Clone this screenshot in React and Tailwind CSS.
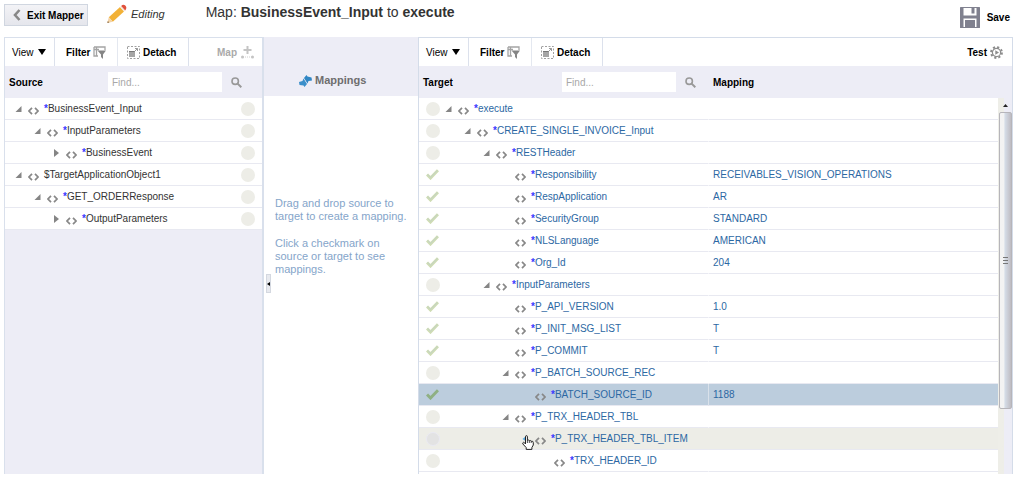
import React from "react";

const sourceRows = [
  { level: 0, name: "BusinessEvent_Input", state: "open", required: true },
  { level: 1, name: "InputParameters", state: "open", required: true },
  { level: 2, name: "BusinessEvent", state: "closed", required: true },
  { level: 0, name: "$TargetApplicationObject1", state: "open", required: false },
  { level: 1, name: "GET_ORDERResponse", state: "open", required: true },
  { level: 2, name: "OutputParameters", state: "closed", required: true },
];

const targetRows = [
  { level: 0, name: "execute", state: "open" },
  { level: 1, name: "CREATE_SINGLE_INVOICE_Input", state: "open" },
  { level: 2, name: "RESTHeader", state: "open" },
  { level: 3, name: "Responsibility", value: "RECEIVABLES_VISION_OPERATIONS" },
  { level: 3, name: "RespApplication", value: "AR" },
  { level: 3, name: "SecurityGroup", value: "STANDARD" },
  { level: 3, name: "NLSLanguage", value: "AMERICAN" },
  { level: 3, name: "Org_Id", value: "204" },
  { level: 2, name: "InputParameters", state: "open" },
  { level: 3, name: "P_API_VERSION", value: "1.0" },
  { level: 3, name: "P_INIT_MSG_LIST", value: "T" },
  { level: 3, name: "P_COMMIT", value: "T" },
  { level: 3, name: "P_BATCH_SOURCE_REC", state: "open" },
  { level: 4, name: "BATCH_SOURCE_ID", value: "1188", selected: true },
  { level: 3, name: "P_TRX_HEADER_TBL", state: "open" },
  { level: 4, name: "P_TRX_HEADER_TBL_ITEM", hovered: true, state: "open" },
  { level: 5, name: "TRX_HEADER_ID" },
];

const indents = ["pl-0", "pl-[19px]", "pl-[38px]", "pl-[57px]", "pl-[77px]", "pl-[96px]"];

function FilterIcon() {
  return (
    <svg width="13" height="13" viewBox="0 0 13 13" aria-hidden="true">
      <path d="M1 1h11v3M1 1v9h4M1 3.5h5M3.5 1v9" fill="none" stroke="#a4a4a4" strokeWidth="1.3" />
      <path d="M4.5 4.5H13L10 8.500V13L8 11V8.500z" fill="#858585" />
    </svg>
  );
}

function DetachIcon() {
  return (
    <svg width="13" height="13" viewBox="0 0 13 13" aria-hidden="true">
      <rect x="0.5" y="0.5" width="12" height="12" fill="none" stroke="#a0a0a0" strokeDasharray="2 1.500" />
      <rect x="2" y="6" width="6" height="5" fill="#a5a5a5" />
      <path d="M2 5.500h6" stroke="#777" />
      <path d="M7.500 5.500l3-3M8 2.500h2.500V5" fill="none" stroke="#999" />
    </svg>
  );
}

function AddMapIcon() {
  return (
    <svg width="13" height="13" viewBox="0 0 13 13" aria-hidden="true">
      <path d="M6.500 0v8M2.500 4h8" stroke="#c4c4c4" strokeWidth="2" />
      <path d="M2 11h9" stroke="#d0d0d0" strokeDasharray="1 1" />
      <circle cx="1.500" cy="11" r="1.500" fill="#c4c4c4" />
      <circle cx="11.500" cy="11" r="1.500" fill="#c4c4c4" />
    </svg>
  );
}

function SearchIcon() {
  return (
    <svg width="11" height="11" viewBox="0 0 11 11" aria-hidden="true">
      <circle cx="4.200" cy="4.200" r="3.200" fill="none" stroke="#999" strokeWidth="1.600" />
      <path d="M6.600 6.600L10.300 10.300" stroke="#999" strokeWidth="2" />
    </svg>
  );
}

function GearIcon() {
  return (
    <svg width="13" height="13" viewBox="0 0 13 13" aria-hidden="true">
      <circle cx="6.500" cy="6.500" r="5.400" fill="none" stroke="#8c8c8c" strokeWidth="2" strokeDasharray="2.120 2.120" />
      <circle cx="6.500" cy="6.500" r="4.100" fill="none" stroke="#8c8c8c" strokeWidth="1.200" />
      <path d="M5.300 4.300L9 6.500L5.300 8.700z" fill="#8c8c8c" />
    </svg>
  );
}

function PencilIcon() {
  return (
    <svg width="20" height="20" viewBox="0 0 20 20" aria-hidden="true">
      <path d="M1.800 13.200L5.800 17.800L17 7.500L13 3z" fill="#f2b136" />
      <path d="M1.800 13.200L0.300 19L5.800 17.800z" fill="#f3d3a6" />
      <path d="M0.800 17L0.300 19L2.400 18.600z" fill="#8a6a48" />
      <path d="M13 3L14.200 1.900L18.200 6.400L17 7.500z" fill="#f5e6d8" />
      <path d="M14.200 1.900Q16 0 18 1.300Q20.600 3.600 18.200 6.400z" fill="#e0513c" />
    </svg>
  );
}

function SaveIcon() {
  return (
    <svg width="20" height="21" viewBox="0 0 20 21" aria-hidden="true">
      <rect width="20" height="21" rx="0.500" fill="#80818f" />
      <path d="M3.500 1h13v7.500h-13z" fill="#fff" />
      <rect x="11.500" y="1" width="3" height="5.500" fill="#80818f" />
      <path d="M3.500 11.500h13V20h-13z" fill="#fff" />
      <path d="M5 13h10v7H5z" fill="#80818f" />
    </svg>
  );
}

function MappingsIcon() {
  return (
    <svg width="13" height="12" viewBox="0 0 13 12" aria-hidden="true">
      <path d="M5 3L7.500 0L8.500 1.500L12.500 2.500L13 5.500L9.500 6L8.500 8.500z" fill="#2f86c4" />
      <path d="M8 9L5.500 12L4.500 10.500L0.500 10L0 7L3.500 6L4.500 3.500z" fill="#3b8fca" />
    </svg>
  );
}

function ElementIcon() {
  return (
    <svg className="mt-1 shrink-0" width="11" height="8" viewBox="0 0 11 8" aria-hidden="true">
      <path d="M4 0.800L1 4L4 7.200M7 0.800L10 4L7 7.200" fill="none" stroke="#888" strokeWidth="1.700" />
    </svg>
  );
}

function CheckIcon({ strong }) {
  return (
    <svg width="13" height="11" viewBox="0 0 13 11" aria-hidden="true">
      <path
        d="M1 5.500L4.500 9L12 1.200"
        fill="none"
        stroke={strong ? "#8fb083" : "#cfdcb4"}
        strokeWidth="3"
      />
      {!strong && <path d="M1.500 5.500L4.500 8.500L11.500 1.500" fill="none" stroke="#c3d3c5" strokeWidth="1" />}
    </svg>
  );
}

function HandCursor() {
  return (
    <svg className="pointer-events-none absolute top-[7px] left-[77px] z-10" width="12" height="15" viewBox="0 0 12 15" aria-hidden="true">
      <path d="M0.500 4L3.500 1.500V6z" fill="#5aa5dc" />
      <path
        d="M3.500 9V1.800Q3.500 0.600 4.500 0.600Q5.400 0.600 5.400 1.800V5.500Q6.500 4.500 7.300 5.700Q8.500 5 9.200 6.200Q11.300 5.700 11.300 7.800V10L9.900 12.500V14.400H4.200V12.600L0.900 9Q0.300 7.700 1.500 7.300Q2.500 7.300 3.500 9z"
        fill="#fff"
        stroke="#222"
      />
      <path d="M5.400 5.500V8M7.300 5.700V8M9.200 6.200V8" stroke="#222" strokeWidth="0.800" />
    </svg>
  );
}

function Marker({ name, hovered }) {
  return (
    <button
      type="button"
      aria-label={"Show mappings of " + name}
      className={"block size-[14px] rounded-full " + (hovered ? "border border-[#eaeaf3] bg-[#e3e3e3]" : "bg-[#edede7]")}
    />
  );
}

function TreeNode({ row, required = true }) {
  return (
    <div className={"flex items-center " + indents[row.level]}>
      <span className="flex w-[13px] shrink-0 items-center">
        {row.state && !row.hovered && (
          <button type="button" aria-label={"Toggle " + row.name} className="block">
            <svg width="7" height="8" viewBox="0 0 7 8" aria-hidden="true">
              <path d={row.state === "open" ? "M6.500 1V7H0.500z" : "M1 0L6 4L1 8z"} fill="#858585" />
            </svg>
          </button>
        )}
      </span>
      <ElementIcon />
      <span className="ml-[5px] leading-[14px] whitespace-nowrap">
        {required && <span className="font-bold text-[#3a3aff]">*</span>}
        {row.name}
      </span>
    </div>
  );
}

function ToolButton({ children }) {
  return (
    <button type="button" className="flex h-full items-center gap-[3px] font-bold">
      {children}
    </button>
  );
}

function PanelTools() {
  return (
    <>
      <div className="flex w-[50px] items-center border-r border-[#dce1ec] pl-[7px]">
        <button type="button" className="flex items-center gap-1">
          View
          <svg width="8" height="6" viewBox="0 0 8 6" aria-hidden="true">
            <path d="M0 0H8L4 6z" fill="#000" />
          </svg>
        </button>
      </div>
      <div className="flex w-[63px] items-center border-r border-[#e4e8f0] pl-[11px]">
        <ToolButton>Filter <FilterIcon /></ToolButton>
      </div>
      <div className="flex w-[71px] items-center border-r border-[#dce1ec] pl-[9px]">
        <ToolButton><DetachIcon /> Detach</ToolButton>
      </div>
    </>
  );
}

function FindBox({ label }) {
  return (
    <form className="flex items-center gap-[9px]">
      <input
        type="text"
        aria-label={label}
        placeholder="Find..."
        className="h-5 w-[114px] bg-white px-1 font-normal outline-none placeholder:text-[#a8a8a8]"
      />
      <button type="button" aria-label={label} className="block">
        <SearchIcon />
      </button>
    </form>
  );
}

export default function App() {
  return (
    <div className="bg-white pr-[3px] pl-[4px] font-['Liberation_Sans',Arial,sans-serif] text-[10px] text-black">
      <header className="flex h-[37px] items-start">
        <button
          type="button"
          className="mt-1 flex h-[22px] w-[84px] items-center gap-[6px] border border-[#d0d6e0] bg-linear-to-b from-[#f3f3f6] to-[#e5e6ec] pl-2 font-bold whitespace-nowrap"
        >
          <svg width="8" height="12" viewBox="0 0 8 12" className="shrink-0" aria-hidden="true">
            <path d="M6.500 1L2 6L6.500 11" fill="none" stroke="#888" strokeWidth="2.600" />
          </svg>
          Exit Mapper
        </button>
        <div className="mt-1 ml-[19px] flex items-center gap-1 text-[#333]">
          <PencilIcon />
          <em className="text-[11px] leading-[20px]">Editing</em>
        </div>
        <h1 className="mt-[2px] ml-[41px] text-[14px] leading-[20px] text-[#333]">
          Map: <b>BusinessEvent_Input</b> to <b>execute</b>
        </h1>
        <button type="button" className="mt-[7px] mr-[3px] ml-auto flex items-center gap-[7px] font-bold">
          <SaveIcon />
          Save
        </button>
      </header>

      <main className="flex">
        <section aria-label="Source" className="w-[260px] shrink-0 border-t border-r-2 border-l border-[#d9e0ec] bg-[#ededf6]">
          <div className="flex h-[28px] bg-white">
            <PanelTools />
            <button type="button" disabled className="mr-[8px] ml-auto flex items-center gap-1 font-bold text-[#aaa]">
              Map <AddMapIcon />
            </button>
          </div>
          <table className="w-full table-fixed border-separate border-spacing-0">
            <colgroup>
              <col />
              <col className="w-[21px]" />
            </colgroup>
            <thead>
              <tr className="h-8">
                <th colSpan={2} className="p-0 pr-5 pl-1">
                  <div className="flex items-center justify-between">
                    Source
                    <FindBox label="Find source" />
                  </div>
                </th>
              </tr>
            </thead>
            <tbody className="text-[#333]">
              {sourceRows.map((row) => (
                <tr key={row.name} className="bg-white">
                  <td className="h-[22px] border-b border-[#e8e9f1] p-0 pl-[10px]">
                    <TreeNode row={row} required={row.required} />
                  </td>
                  <td className="border-b border-[#e8e9f1] p-0">
                    <Marker name={row.name} />
                  </td>
                </tr>
              ))}
            </tbody>
          </table>
        </section>

        <section aria-label="Mappings" className="relative w-[154px] shrink-0">
          <h2 className="flex h-[59px] items-end gap-[3px] bg-[#ededf6] pb-[9px] pl-[35px] text-[11px] font-bold text-[#6e6e6e]">
            <MappingsIcon />
            <span className="leading-[14px]">Mappings</span>
          </h2>
          <div className="mt-[101px] space-y-[14px] px-[11px] text-[11px] leading-[13px] whitespace-nowrap text-[#85a5ca]">
            <p>Drag and drop source to<br />target to create a mapping.</p>
            <p>Click a checkmark on<br />source or target to see<br />mappings.</p>
          </div>
          <button
            type="button"
            aria-label="Collapse source"
            className="absolute top-[237px] left-[2px] flex h-[19px] w-[5px] items-center justify-center border border-[#d4d8e0] bg-[#e8eaef]"
          >
            <svg className="shrink-0" width="3" height="4" viewBox="0 0 3 4" aria-hidden="true">
              <path d="M3 0V4L0 2z" fill="#000" />
            </svg>
          </button>
        </section>

        <section aria-label="Target" className="min-w-0 flex-1 border-t border-r border-l border-[#d4dce9]">
          <div className="flex h-[28px] bg-white">
            <PanelTools />
            <div className="mr-[9px] ml-auto flex">
              <ToolButton>Test <GearIcon /></ToolButton>
            </div>
          </div>
          <div className="flex bg-[#ededf6]">
            <div className="min-w-0 flex-1 bg-white pb-[2px]">
              <table className="w-full table-fixed border-separate border-spacing-0">
                <colgroup>
                  <col className="w-[26px]" />
                  <col className="w-[263px]" />
                  <col />
                </colgroup>
                <thead className="bg-[#ededf6]">
                  <tr className="h-8">
                    <th colSpan={2} className="p-0 pr-3 pl-1">
                      <div className="flex items-center justify-between">
                        Target
                        <FindBox label="Find target" />
                      </div>
                    </th>
                    <th className="p-0 pl-[5px] text-left">Mapping</th>
                  </tr>
                </thead>
                <tbody className="text-[#2c68a3]">
                  {targetRows.map((row) => (
                    <tr key={row.name} className={row.selected ? "bg-[#bccddd]" : row.hovered ? "bg-[#edede7]" : "bg-white"}>
                      <td className="h-[22px] border-b border-[#e8e9f1] p-0 pl-[7px]">
                        {row.value ? <CheckIcon strong={row.selected} /> : <Marker name={row.name} hovered={row.hovered} />}
                      </td>
                      <td className="relative border-b border-[#e8e9f1] p-0">
                        <TreeNode row={row} />
                        {row.hovered && <HandCursor />}
                      </td>
                      <td className={"border-b border-l border-b-[#e8e9f1] p-0 pl-1 " + (row.selected ? "border-l-[#d9e1ea]" : "border-l-transparent")}>
                        {row.value}
                      </td>
                    </tr>
                  ))}
                </tbody>
              </table>
            </div>
            <div className="flex w-[14px] flex-col bg-[#ededf6]">
              <div className="h-8" />
              <div className="flex flex-1 flex-col items-center bg-linear-to-r from-[#eeeee8] from-40% to-[#ededf6] to-40%">
                <button type="button" aria-label="Scroll up" className="flex h-[14px] w-full items-center justify-center">
                  <svg width="5" height="3" viewBox="0 0 5 3" aria-hidden="true">
                    <path d="M2.500 0L5 3H0z" fill="#222" />
                  </svg>
                </button>
                <div className="flex h-[297px] w-[13px] items-center justify-center rounded-xs border border-[#b6b5ba] bg-linear-to-r from-[#f3f3f3] from-35% via-[#d5dde8] via-45% to-[#bfbcc2]">
                  <svg width="5" height="7" viewBox="0 0 5 7" aria-hidden="true">
                    <path d="M0 0.500H5M0 3.500H5M0 6.500H5" stroke="#777" />
                  </svg>
                </div>
              </div>
            </div>
          </div>
        </section>
      </main>
    </div>
  );
}
